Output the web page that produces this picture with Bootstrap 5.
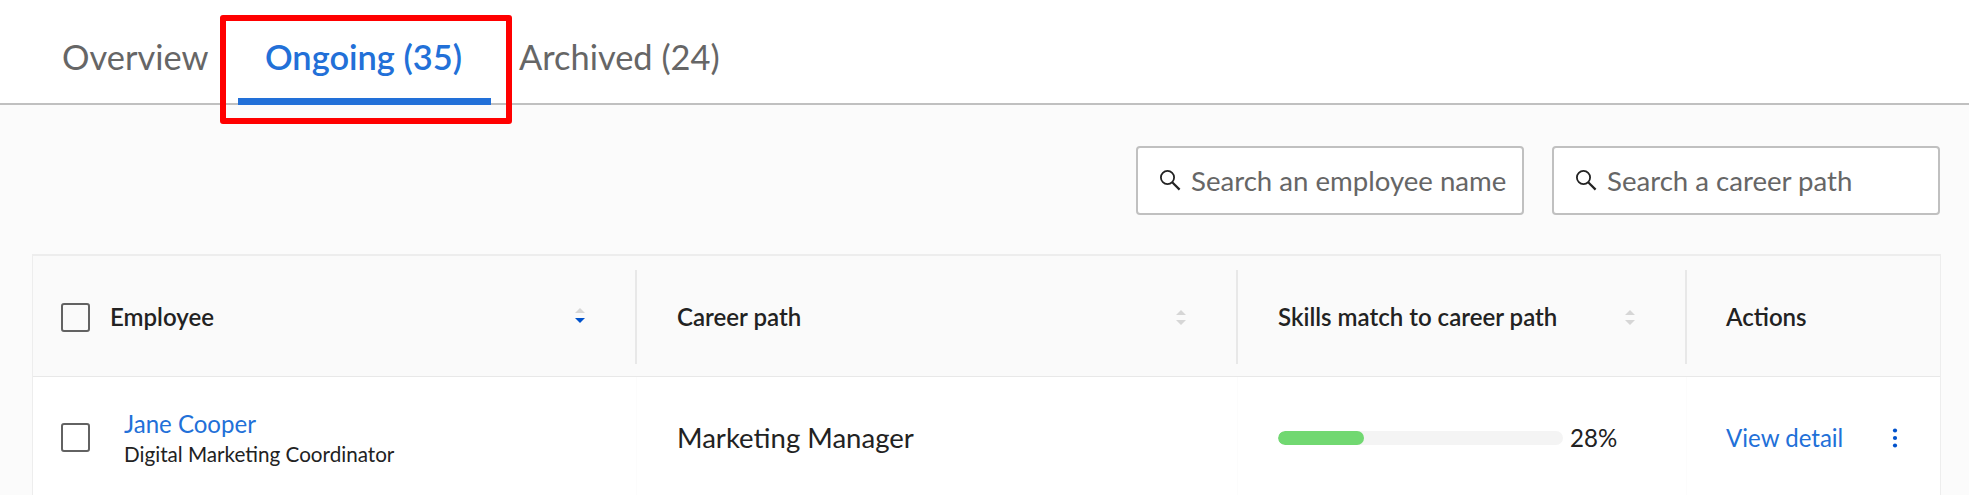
<!DOCTYPE html>
<html lang="en">
<head>
<meta charset="utf-8">
<title>Career paths</title>
<link href="https://cdn.jsdelivr.net/npm/bootstrap@5.3.0/dist/css/bootstrap.min.css" rel="stylesheet">
<style>
body{font-family:Lato,sans-serif;font-size:24.05px;line-height:30px;color:#222;background:#fbfbfb;height:495px;overflow:hidden;white-space:nowrap}
.tabs-bar{height:105px;background:#fff;border-bottom:2px solid #c0c0c0;padding-left:30px}
.tabs-bar .nav-link{height:105px;padding:35px 0 0;font-size:34.4px;line-height:44px;color:#666;border:0;border-radius:0}
.tabs-bar .tab-overview{width:208px;padding-left:32px}
.tabs-bar .nav-link.active{width:253px;padding-left:27px;color:#2270d8;font-weight:600;box-shadow:inset 0 -7px #2270d8}
.tabs-bar .tab-archived{padding-left:28px}
.callout-frame{position:absolute;left:-18px;top:15px;width:292px;height:109px;border:6px solid #f00;border-radius:3px}
.filters{padding:41px 29px 0 0;gap:28px}
.search-box{width:388px;height:69px;border:2px solid #c0c0c0;border-radius:4px;background:#fff;padding-left:21px}
.search-box input{border:0;outline:0;background:none;padding:0;margin-left:10px;width:326px;font-size:27.6px;line-height:34px;color:#666}
.search-box input::placeholder{color:#666;opacity:1}
.grid-wrap{margin:39px 28px 0 32px;border:solid #ededed;border-width:2px 1px 0}
.grid-line{display:grid;grid-template-columns:604px 601px 449px 1fr}
.grid-head{height:121px;background:#fafafa;border-bottom:1px solid #e8e8e8;font-weight:600;padding-bottom:1px}
.grid-body{height:120px;background:#fff}
.cell{padding-left:40px}
.cell:first-child{padding-left:28px}
.cell:last-child{padding-left:39px}
.grid-head .cell{margin:14px 0 11px}
.grid-head .cell:not(:last-child){border-right:2px solid #e8e8e8}
.grid-body .cell:not(:last-child){border-right:1px solid #fcfcfc}
.grid-body .cell:not(:first-child){padding-top:2px}
.grid-head .sorter{margin-right:50px}
.form-check-input.box{width:29px;height:29px;margin:0;border:2px solid #626262;border-radius:3px;background:transparent;flex:none}
.blue-link{color:#2270d8;text-decoration:none}
.head-first{margin-left:20px}
.person{margin-left:34px;padding-top:4px}
.job-title{font-size:20.65px;line-height:30px}
.path-name{font-size:27.55px}
.progress.match{width:285px;height:14px;border-radius:7px;background:#f4f4f4}
.match .progress-bar{background:#71d871;border-radius:7px}
.match-value{margin-left:7px}
.more{margin-left:49px}
</style>
</head>
<body>
<nav class="nav nav-tabs tabs-bar flex-nowrap">
  <a class="nav-link tab-overview" href="#">Overview</a>
  <div class="position-relative">
    <a class="nav-link active" href="#">Ongoing (35)</a>
    <div class="callout-frame"></div>
  </div>
  <a class="nav-link tab-archived" href="#">Archived (24)</a>
</nav>
<div class="filters d-flex justify-content-end">
  <label class="search-box d-flex align-items-center">
    <svg width="22" height="22" viewBox="0 0 22 22" fill="none" stroke="#222" stroke-width="1.8"><circle cx="8.5" cy="7.5" r="6.6"/><path d="M13.2 12.2 20.6 19.6" stroke-width="2.2"/></svg>
    <input type="text" placeholder="Search an employee name">
  </label>
  <label class="search-box d-flex align-items-center">
    <svg width="22" height="22" viewBox="0 0 22 22" fill="none" stroke="#222" stroke-width="1.8"><circle cx="8.5" cy="7.5" r="6.6"/><path d="M13.2 12.2 20.6 19.6" stroke-width="2.2"/></svg>
    <input type="text" placeholder="Search a career path">
  </label>
</div>
<main class="grid-wrap">
  <div class="grid-line grid-head">
    <div class="cell d-flex align-items-center">
      <input class="form-check-input box" type="checkbox">
      <span class="head-first">Employee</span>
      <svg class="sorter ms-auto mb-1" width="10" height="15" viewBox="0 0 10 15"><path d="M0 5 5 0l5 5z" fill="#d6d6d6"/><path d="M0 10h10l-5 5z" fill="#0052cc"/></svg>
    </div>
    <div class="cell d-flex align-items-center">
      <span>Career path</span>
      <svg class="sorter ms-auto" width="10" height="15" viewBox="0 0 10 15" fill="#d6d6d6"><path d="M0 5 5 0l5 5zM0 10h10l-5 5z"/></svg>
    </div>
    <div class="cell d-flex align-items-center">
      <span>Skills match to career path</span>
      <svg class="sorter ms-auto" width="10" height="15" viewBox="0 0 10 15" fill="#d6d6d6"><path d="M0 5 5 0l5 5zM0 10h10l-5 5z"/></svg>
    </div>
    <div class="cell d-flex align-items-center"><span>Actions</span></div>
  </div>
  <div class="grid-line grid-body">
    <div class="cell d-flex align-items-center">
      <input class="form-check-input box" type="checkbox">
      <div class="person">
        <a class="blue-link d-block" href="#">Jane Cooper</a>
        <div class="job-title">Digital Marketing Coordinator</div>
      </div>
    </div>
    <div class="cell d-flex align-items-center path-name">Marketing Manager</div>
    <div class="cell d-flex align-items-center">
      <div class="progress match"><div class="progress-bar" style="width:30%"></div></div>
      <span class="match-value">28%</span>
    </div>
    <div class="cell d-flex align-items-center">
      <a class="blue-link" href="#">View detail</a>
      <svg class="more" width="6" height="20" viewBox="0 0 6 20" fill="#0052cc"><circle cx="3" cy="2.5" r="2.1"/><circle cx="3" cy="10" r="2.1"/><circle cx="3" cy="17.5" r="2.1"/></svg>
    </div>
  </div>
</main>
<script src="https://cdn.jsdelivr.net/npm/bootstrap@5.3.0/dist/js/bootstrap.bundle.min.js"></script>
</body>
</html>
